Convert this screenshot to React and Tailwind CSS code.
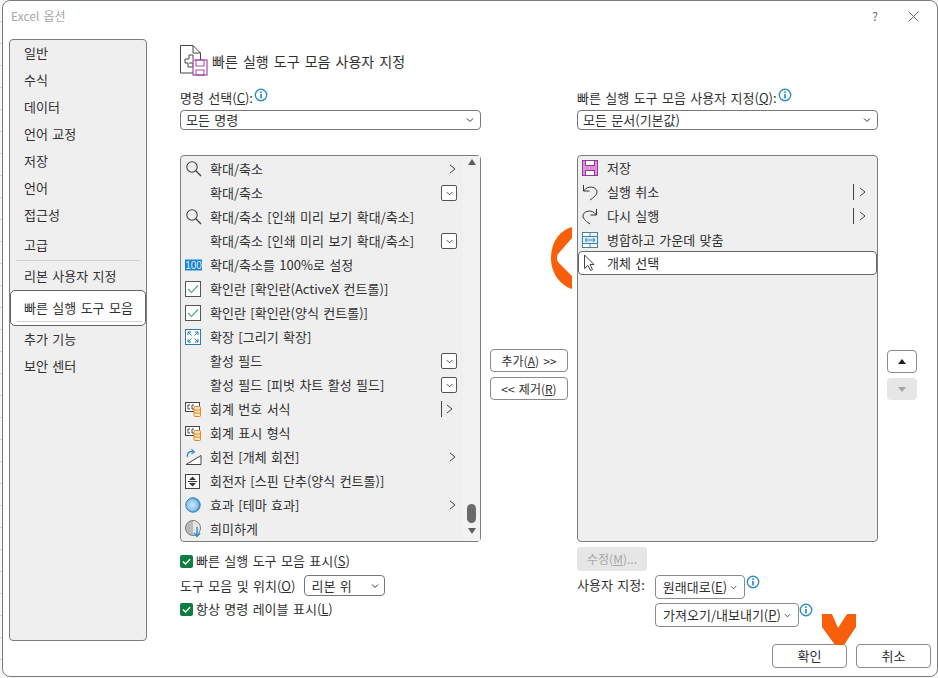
import React from "react";

const Chev = ({ className = "", w = 8, h = 8 }) => (
  <svg width={w} height={h} viewBox="0 0 8 8" className={className} fill="none" stroke="#333" strokeWidth="1"><path d="M1 2.5 L4 5.5 L7 2.5" /></svg>
);
const Right = () => (
  <svg width="7" height="10" viewBox="0 0 7 10" fill="none" stroke="#444" strokeWidth="1"><path d="M1 1 L6 5 L1 9" /></svg>
);
const Info = ({ className = "" }) => (
  <svg width="14" height="14" viewBox="0 0 14 14" className={className}>
    <circle cx="7" cy="7" r="5.7" fill="#fff" stroke="#2a8fc9" strokeWidth="1.4" />
    <rect x="6.2" y="6" width="1.6" height="4.4" fill="#2a7fb5" />
    <rect x="6.2" y="3.4" width="1.6" height="1.6" fill="#2a7fb5" />
  </svg>
);
const Mag = () => (
  <svg width="18" height="18" viewBox="0 0 18 18" fill="none" stroke="#444" strokeWidth="1.1"><circle cx="7" cy="7" r="5.2" /><path d="M10.8 10.8 L16 16" strokeWidth="1.4" /></svg>
);
const Hundred = () => (
  <svg width="17" height="12" viewBox="0 0 17 12"><rect width="17" height="11" y="0.5" fill="#1c86d1" /><text x="8.5" y="9.5" fontSize="10" fontFamily="Liberation Sans" fill="#dff0fb" textAnchor="middle">100</text></svg>
);
const Check = () => (
  <svg width="16" height="16" viewBox="0 0 16 16" fill="none"><rect x="0.5" y="0.5" width="15" height="15" fill="#fff" stroke="#555" /><path d="M3 8 L6.5 11.5 L13 4.5" stroke="#4caf73" strokeWidth="1.2" /></svg>
);
const Expand = () => (
  <svg width="16" height="16" viewBox="0 0 16 16" fill="none"><rect x="0.5" y="0.5" width="15" height="15" fill="#fff" stroke="#2b7cb5" /><path d="M3 3 L6.5 6.5 M3 3 H6 M3 3 V6 M13 3 L9.5 6.5 M13 3 H10 M13 3 V6 M3 13 L6.5 9.5 M3 13 H6 M3 13 V10 M13 13 L9.5 9.5 M13 13 H10 M13 13 V10" stroke="#2b7cb5" /></svg>
);
const Acct = () => (
  <svg width="16" height="16" viewBox="0 0 16 16" fill="none"><rect x="0.5" y="1.5" width="14" height="9" fill="#fff" stroke="#444" /><path d="M5 4 H3 V8 H5 M9 4 H7 V8 H9" stroke="#444" /><rect x="9" y="5.5" width="6.5" height="10" rx="1" fill="#fbe3c4" stroke="#e08a1e" /><path d="M9 9 H15.5 M9 12 H15.5" stroke="#e08a1e" /></svg>
);
const Rotate = () => (
  <svg width="17" height="17" viewBox="0 0 17 17" fill="none"><path d="M1 15.5 L16 6.5 V15.5 Z" fill="#fff" stroke="#444" /><path d="M2.5 8 C1.5 4 5 1.5 8.5 3" stroke="#2a8fc9" strokeWidth="1.3" /><path d="M6.5 0.5 L9.5 3 L6.5 5" stroke="#2a8fc9" strokeWidth="1.1" /></svg>
);
const Spin = () => (
  <svg width="15" height="15" viewBox="0 0 15 15"><rect x="0.5" y="0.5" width="14" height="14" fill="#fff" stroke="#444" /><path d="M7.5 2.5 L11 6 H4 Z M7.5 12.5 L11 9 H4 Z" fill="#333" /><rect x="3" y="7" width="9" height="1" fill="#333" /></svg>
);
const Effect = () => (
  <svg width="16" height="16" viewBox="0 0 16 16"><defs><radialGradient id="efg" cx="45%" cy="50%" r="55%"><stop offset="0" stopColor="#cfe6f7" /><stop offset="0.7" stopColor="#8fc2e8" /><stop offset="1" stopColor="#2b82c4" /></radialGradient></defs><circle cx="8" cy="8" r="7.2" fill="url(#efg)" stroke="#2b82c4" /></svg>
);
const Dim = () => (
  <svg width="18" height="18" viewBox="0 0 18 18" fill="none"><circle cx="8" cy="8" r="7.5" fill="#b9b9b9" stroke="#777" /><path d="M8 1 A7 7 0 0 1 8 15 Z" fill="#e6e6e6" /><path d="M12 7 V16 M9 13 L12 16.5 L15 13" stroke="#2a8fc9" strokeWidth="1.4" /></svg>
);
const Save = () => (
  <svg width="16" height="16" viewBox="0 0 16 16" fill="none"><rect x="0.5" y="0.5" width="15" height="15" fill="#dd8fdb" stroke="#93399a" /><rect x="3.5" y="0.5" width="9" height="5" fill="#fff" stroke="#93399a" /><rect x="3.5" y="10.5" width="9" height="5" fill="#fff" stroke="#93399a" /></svg>
);
const Undo = () => (
  <svg width="16" height="17" viewBox="0 0 16 17" fill="none" stroke="#333" strokeWidth="1"><path d="M1.5 1 V7 H7.5" /><path d="M1.5 7 L4 4.5 C8 1.5 15 3.5 15 8 C15 11 11 14 8 16" /></svg>
);
const Redo = () => (
  <svg width="16" height="17" viewBox="0 0 16 17" fill="none" stroke="#333" strokeWidth="1"><path d="M14.5 1 V7 H8.5" /><path d="M14.5 7 L12 4.5 C8 1.5 1 3.5 1 8 C1 11 5 14 8 16" /></svg>
);
const Merge = () => (
  <svg width="16" height="16" viewBox="0 0 16 16" fill="none"><rect x="0.5" y="0.5" width="15" height="15" fill="#fff" stroke="#3d86a8" /><rect x="0.5" y="4.5" width="15" height="7" fill="#dcecf7" stroke="#3d86a8" /><path d="M8 0.5 V4.5 M8 11.5 V15.5" stroke="#3d86a8" /><path d="M3 8 H13 M5 6 L3 8 L5 10 M11 6 L13 8 L11 10" stroke="#2a8fc9" /></svg>
);
const Cursor = () => (
  <svg width="12" height="18" viewBox="0 0 12 18" fill="none" stroke="#444"><path d="M1.5 1 V14.5 L5 11.5 L7.5 16.5 L9.5 15.5 L7 10.5 H11 Z" fill="#fff" /></svg>
);
const TitleIcon = () => (
  <svg width="28" height="32" viewBox="0 0 28 32" fill="none"><path d="M0.5 1.5 H13 L20.5 9 V29 H0.5 Z M13 1.5 V9 H20.5" fill="#fff" stroke="#444" /><path d="M5 15 H9 V11 H13 V15 M5 15 V19 H8 V23 H13 V19 M9 19 H13" stroke="#444" /><rect x="13" y="16" width="14" height="15" fill="#fff" stroke="#a04ba6" strokeWidth="1.2" /><rect x="16" y="16" width="8" height="6" stroke="#a04ba6" /><rect x="16" y="26" width="8" height="5" stroke="#a04ba6" /></svg>
);

const Box = () => (
  <span className="flex h-[16px] w-[16px] items-center justify-center rounded-[2px] border border-[#555] bg-white">
    <Chev w={7} h={7} />
  </span>
);

const U = ({ children }) => <span className="underline underline-offset-[1px]">{children}</span>;

const leftRows = [
  [<Mag />, "확대/축소", "r"],
  [null, "확대/축소", "b"],
  [<Mag />, "확대/축소 [인쇄 미리 보기 확대/축소]"],
  [null, "확대/축소 [인쇄 미리 보기 확대/축소]", "b"],
  [<Hundred />, "확대/축소를 100%로 설정"],
  [<Check />, "확인란 [확인란(ActiveX 컨트롤)]"],
  [<Check />, "확인란 [확인란(양식 컨트롤)]"],
  [<Expand />, "확장 [그리기 확장]"],
  [null, "활성 필드", "b"],
  [null, "활성 필드 [피벗 차트 활성 필드]", "b"],
  [<Acct />, "회계 번호 서식", "p"],
  [<Acct />, "회계 표시 형식"],
  [<Rotate />, "회전 [개체 회전]", "r"],
  [<Spin />, "회전자 [스핀 단추(양식 컨트롤)]"],
  [<Effect />, "효과 [테마 효과]", "r"],
  [<Dim />, "희미하게"],
];

const Row = ({ icon, text, trail }) => (
  <div className="flex h-6 items-center">
    <span className="flex w-[29px] shrink-0 items-center pl-[4px]">{icon}</span>
    <span className="flex-1 truncate">{text}</span>
    <span className="flex w-[22px] shrink-0 items-center">
      {trail === "r" && <span className="ml-[8px]"><Right /></span>}
      {trail === "b" && <Box />}
      {trail === "p" && (
        <>
          <span className="h-[16px] w-px bg-[#444]" />
          <span className="ml-[4px]"><Right /></span>
        </>
      )}
    </span>
  </div>
);

const rightRows = [
  [<Save />, "저장"],
  [<Undo />, "실행 취소", true],
  [<Redo />, "다시 실행", true],
  [<Merge />, "병합하고 가운데 맞춤"],
];

const Btn = ({ className = "", children }) => (
  <div className={"flex items-center justify-center rounded-[4px] border border-[#8a8a8a] bg-white " + className}>{children}</div>
);

const Combo = ({ text }) => (
  <div className="flex h-[20px] w-[301px] items-center justify-between rounded-[4px] border border-[#777] bg-white pl-[5px] pr-[6px]">
    <span>{text}</span>
    <Chev />
  </div>
);

const GreenCheck = () => (
  <svg width="13" height="13" viewBox="0 0 13 13"><rect width="13" height="13" rx="2" fill="#107c41" /><path d="M3 6.5 L5.5 9 L10 4.2" fill="none" stroke="#fff" strokeWidth="1.5" /></svg>
);

const sidebarTop = ["일반", "수식", "데이터", "언어 교정", "저장", "언어", "접근성"];

export default function App() {
  return (
    <div
      className="relative h-[678px] w-[938px] overflow-hidden bg-[repeating-linear-gradient(to_bottom,#f6f6f6_0,#f6f6f6_21px,#d4d4d4_21px,#d4d4d4_22px)] pl-[2px] text-[13px] leading-[18px] text-[#303030] [word-spacing:1.5px]"
      style={{ fontFamily: '"Noto Sans CJK KR","Liberation Sans",sans-serif' }}
    >
      <div className="flex h-[677px] w-[936px] flex-col rounded-[8px] border border-[#7d7d7d] bg-white">
        {/* title bar */}
        <div className="flex h-[30px] shrink-0 items-center justify-between pl-[8px] pr-[18px]">
          <span className="text-[12px] text-[#a8a8a8]">Excel 옵션</span>
          <div className="flex items-center gap-[30px] text-[#666]">
            <span className="text-[12px]">?</span>
            <svg width="11" height="11" viewBox="0 0 11 11" stroke="#666" fill="none"><path d="M0.5 0.5 L10.5 10.5 M10.5 0.5 L0.5 10.5" /></svg>
          </div>
        </div>

        <div className="flex flex-1 pl-[6px] pt-[8px]">
          {/* sidebar */}
          <div className="h-[602px] w-[138px] shrink-0 rounded-[4px] border border-[#7d7d7d] bg-[#efefef] pl-[14px]">
            {sidebarTop.map((s, i) => (
              <div key={s} className={"flex items-center " + (i === 0 ? "h-[26px]" : "h-[27px]")}>{s}</div>
            ))}
            <div className="mt-[3px] flex h-[27px] items-center">고급</div>
            <div className="-ml-[8px] mr-[6px] mt-[2px] h-px bg-[#d0d0d0]" />
            <div className="flex h-[29px] items-center pt-[1px]">리본 사용자 지정</div>
            <div className="relative -ml-[14px] flex h-[36px] items-center rounded-[5px] border border-[#666] bg-white pl-[13px]">
              빠른 실행 도구 모음
              <span className="absolute bottom-[3px] left-[6px] right-[3px] h-px bg-[#d0d0d0]" />
            </div>
            <div className="flex h-[26px] items-center">추가 기능</div>
            <div className="flex h-[27px] items-center">보안 센터</div>
          </div>

          {/* main */}
          <div className="ml-[33px] flex w-[740px] flex-col pt-[5px]">
            <div className="flex h-[32px] items-center">
              <TitleIcon />
              <span className="ml-[4px] mt-[1px] text-[14px] [word-spacing:2px]">빠른 실행 도구 모음 사용자 지정</span>
            </div>

            <div className="mt-[10px] flex">
              <div className="flex w-[301px] flex-col">
                <div className="flex h-[24px] items-center">명령 선택(<U>C</U>):<Info className="-mt-[6px] ml-[1px]" /></div>
                <Combo text="모든 명령" />
              </div>
              <div className="ml-[96px] flex w-[301px] flex-col">
                <div className="flex h-[24px] items-center">빠른 실행 도구 모음 사용자 지정(<U>Q</U>):<Info className="-mt-[6px] ml-[1px]" /></div>
                <Combo text="모든 문서(기본값)" />
              </div>
            </div>

            <div className="mt-[25px] flex">
              {/* left list */}
              <div className="flex h-[387px] w-[301px] shrink-0 rounded-[4px] border border-[#7d7d7d] bg-[#efefef]">
                <div className="flex-1 pt-[1px]">
                  {leftRows.map(([i, t, tr], n) => <Row key={n} icon={i} text={t} trail={tr} />)}
                </div>
                <div className="flex w-[17px] shrink-0 flex-col items-center bg-[#f2f2f2] pb-[7px] pt-[3px]">
                  <span className="h-0 w-0 border-x-[4px] border-b-[6px] border-x-transparent border-b-[#5f5f5f]" />
                  <span className="mt-auto h-[19px] w-[9px] rounded-full bg-[#6b6b6b]" />
                  <span className="mt-[5px] h-0 w-0 border-x-[4px] border-t-[6px] border-x-transparent border-t-[#5f5f5f]" />
                </div>
              </div>

              {/* middle buttons */}
              <div className="ml-[9px] flex w-[78px] shrink-0 flex-col pt-[194px]">
                <Btn className="h-[23px]"><span className="text-[12px]">추가(<U>A</U>) &gt;&gt;</span></Btn>
                <Btn className="mt-[5px] h-[23px]"><span className="text-[12px]">&lt;&lt; 제거(<U>R</U>)</span></Btn>
              </div>

              {/* right list */}
              <div className="ml-[9px] h-[387px] w-[301px] shrink-0 rounded-[4px] border border-[#7d7d7d] bg-[#efefef]">
                {rightRows.map(([i, t, tr], n) => (
                  <div key={n} className="flex h-6 items-center">
                    <span className="flex w-[29px] shrink-0 items-center pl-[4px]">{i}</span>
                    <span className="flex-1">{t}</span>
                    {tr && (
                      <span className="mr-[11px] flex items-center">
                        <span className="h-[16px] w-px bg-[#444]" />
                        <span className="ml-[5px]"><Right /></span>
                      </span>
                    )}
                  </div>
                ))}
                <div className="-mt-[1px] flex h-[24px] items-center rounded-[4px] border border-[#666] bg-white">
                  <span className="flex w-[28px] shrink-0 items-center pl-[4px]"><Cursor /></span>
                  <span>개체 선택</span>
                </div>
              </div>

              {/* up/down */}
              <div className="ml-[9px] flex w-[30px] shrink-0 flex-col pt-[195px]">
                <Btn className="h-[23px]"><span className="h-0 w-0 border-x-[4px] border-b-[5px] border-x-transparent border-b-[#222]" /></Btn>
                <div className="mt-[5px] flex h-[22px] items-center justify-center rounded-[4px] bg-[#e6e6e6]"><span className="h-0 w-0 border-x-[4px] border-t-[5px] border-x-transparent border-t-[#a5a5a5]" /></div>
              </div>
            </div>

            {/* bottom */}
            <div className="flex">
              <div className="w-[301px] shrink-0">
                <div className="mt-[9px] flex h-[20px] items-center gap-[3px]"><GreenCheck /><span>빠른 실행 도구 모음 표시(<U>S</U>)</span></div>
                <div className="mt-[4px] flex h-[21px] items-center">
                  <span>도구 모음 및 위치(<U>O</U>)</span>
                  <div className="ml-[9px] flex h-[21px] w-[81px] items-center justify-between rounded-[4px] border border-[#777] bg-white pl-[6px] pr-[5px]"><span>리본 위</span><Chev /></div>
                </div>
                <div className="mt-[3px] flex h-[20px] items-center gap-[3px]"><GreenCheck /><span>항상 명령 레이블 표시(<U>L</U>)</span></div>
              </div>
              <div className="ml-[96px] flex-1">
                <div className="mt-[5px] flex h-[24px] w-[70px] items-center justify-center rounded-[4px] bg-[#e6e6e6] text-[12px] text-[#a8a8a8]">수정(<U>M</U>)...</div>
                <div className="mt-[4px] flex items-start">
                  <span className="mt-[1px] w-[78px]">사용자 지정:</span>
                  <div className="flex flex-col gap-[4px]">
                    <div className="flex items-start">
                      <Btn className="h-[24px] w-[90px] gap-[3px]"><span>원래대로(<U>E</U>)</span><Chev w={7} h={7} /></Btn>
                      <Info className="ml-[1px]" />
                    </div>
                    <div className="flex items-start">
                      <Btn className="h-[24px] w-[144px] gap-[3px]"><span>가져오기/내보내기(<U>P</U>)</span><Chev w={7} h={7} /></Btn>
                      <Info />
                    </div>
                  </div>
                </div>
              </div>
            </div>

            <div className="mr-[-11px] mt-[17px] flex justify-end gap-[9px]">
              <Btn className="h-[24px] w-[75px]">확인</Btn>
              <Btn className="h-[24px] w-[75px]">취소</Btn>
            </div>
          </div>
        </div>
      </div>

      {/* orange annotations */}
      <svg className="absolute left-[550px] top-[225px]" width="24" height="66" viewBox="0 0 24 66">
        <path d="M22 2 C10 5 1 17 1 33 C1 48 10 60 22 64 V51 L8 37 Q6 33 8 29 L22 13 Z" fill="#f95f0a" />
      </svg>
      <svg className="absolute left-[821px] top-[613px]" width="36" height="33" viewBox="0 0 36 33">
        <path d="M1 1 H11 L17 15 L26 1 H35 V14 L23 32 H14 L1 14 Z" fill="#f95f0a" />
      </svg>
    </div>
  );
}
